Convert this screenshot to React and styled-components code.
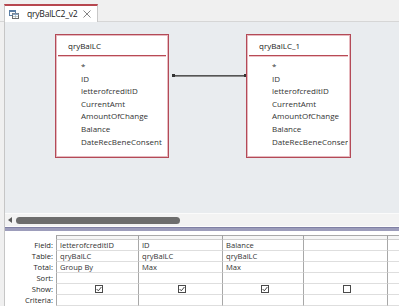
import React from "react";
import styled, { createGlobalStyle } from "styled-components";

const Global = createGlobalStyle`
  html, body { margin: 0; padding: 0; background: #f0f0f0; overflow: hidden; }
  * { box-sizing: border-box; }
`;

const Window = styled.div`
  width: 399px;
  height: 306px;
  display: flex;
  flex-direction: column;
  background: #f0f0f0;
  font-family: "Open Sans", "Noto Sans", sans-serif;
  color: #333;
  overflow: hidden;
`;

const TabStrip = styled.div`
  height: 22px;
  flex: none;
  display: flex;
  align-items: flex-end;
  padding-left: 4px;
  background: #f0f0f0;
  border-bottom: 1px solid #d6d6d6;
`;

const Tab = styled.div`
  width: 94px;
  height: 18px;
  margin-bottom: -1px;
  display: flex;
  align-items: center;
  padding-left: 4px;
  background: #ffffff;
  border-top: 2px solid #b7474f;
  border-left: 1px solid #c8c8c8;
  border-right: 1px solid #c8c8c8;
  font-size: 8.6px;
  letter-spacing: -0.25px;
  color: #222;
`;

const TabLabel = styled.span`
  margin-left: 8px;
  flex: 1;
  white-space: nowrap;
`;

const CloseIcon = styled.svg`
  margin-right: 6px;
`;

const Body = styled.div`
  flex: 1;
  display: flex;
  min-height: 0;
`;

const LeftRail = styled.div`
  width: 5px;
  flex: none;
  background: #f0f0f0;
  border-right: 1px solid #c6c6c6;
`;

const Main = styled.div`
  flex: 1;
  display: flex;
  flex-direction: column;
  min-width: 0;
`;

const Canvas = styled.div`
  position: relative;
  height: 191px;
  flex: none;
  background: #e9ecef;
`;

const TableBox = styled.div`
  position: absolute;
  left: ${(p) => p.$x}px;
  top: ${(p) => p.$y}px;
  width: ${(p) => p.$w}px;
  height: 124px;
  background: #fff;
  border: 1px solid #b34a57;
  box-shadow: inset 0 0 0 1px #e7b9bf;
  display: flex;
  flex-direction: column;
  overflow: hidden;
`;

const BoxTitle = styled.div`
  height: 21px;
  flex: none;
  display: flex;
  align-items: center;
  padding-left: 10px;
  margin: 0 2px;
  font-size: 8px;
  color: #222;
  border-bottom: 1px solid #b84a55;
  box-shadow: 0 1px 0 #ecc3c7;
`;

const FieldList = styled.div`
  display: flex;
  flex-direction: column;
  padding-top: 4px;
  padding-left: 25px;
  margin-right: 2px;
  overflow: hidden;
`;

const FieldItem = styled.div`
  height: 12.6px;
  line-height: 12.6px;
  font-size: 8px;
  color: #333;
  white-space: nowrap;
`;

const JoinLine = styled.div`
  position: absolute;
  left: 167px;
  top: 53px;
  width: 75px;
  height: 2px;
  background: #8a8a8a;
  border-top: 1px solid #555;
  &::before, &::after {
    content: "";
    position: absolute;
    top: -2px;
    width: 3px;
    height: 3px;
    background: #333;
  }
  &::before { left: 0; }
  &::after { right: 0; }
`;

const ScrollBar = styled.div`
  height: 14px;
  flex: none;
  display: flex;
  align-items: center;
  gap: 4px;
  padding-left: 3px;
  background: #f3f3f3;
  border-top: 1px solid #fbfbfb;
  border-bottom: 1px solid #fdfdfd;
`;

const Arrow = styled.div`
  width: 0;
  height: 0;
  border-top: 3px solid transparent;
  border-bottom: 3px solid transparent;
  border-right: 4px solid #5a5a5a;
`;

const Thumb = styled.div`
  width: 164px;
  height: 7px;
  border-radius: 4px;
  background: #6d6d6d;
`;

const Splitter = styled.div`
  height: 4px;
  flex: none;
  background: #9d9dbb;
  border-top: 1px solid #8080a4;
`;

const GridArea = styled.div`
  flex: 1;
  background: #fff;
  padding-top: 4px;
`;

const Grid = styled.div`
  display: grid;
  grid-template-columns: 51px 82px 84px 81px 84px 30px;
  grid-template-rows: 5px repeat(6, 11px);
  font-size: 7.6px;
`;

const Corner = styled.div``;

const HeadCell = styled.div`
  background: #f6f6f6;
  border-top: 1px solid #a9a9a9;
  border-bottom: 1px solid #d0d0d0;
  border-left: 1px solid #a0a0a0;
`;

const Label = styled.div`
  text-align: right;
  padding-right: 3px;
  line-height: 11px;
  color: #1f1f1f;
  white-space: nowrap;
`;

const Cell = styled.div`
  border-left: 1px solid #a8a8a8;
  border-bottom: 1px solid #dedede;
  padding-left: 3px;
  line-height: 10px;
  color: #333;
  white-space: nowrap;
  overflow: hidden;
  display: flex;
  align-items: center;
  justify-content: ${(p) => (p.$center ? "center" : "flex-start")};
`;

const Check = styled.div`
  width: 8px;
  height: 8px;
  border: 1px solid #4a4a4a;
  background: #fff;
  display: flex;
  align-items: center;
  justify-content: center;
`;

const fields = ["*", "ID", "letterofcreditID", "CurrentAmt", "AmountOfChange", "Balance", "DateRecBeneConsent"];

const rows = [
  { label: "Field:", vals: ["letterofcreditID", "ID", "Balance", "", ""] },
  { label: "Table:", vals: ["qryBalLC", "qryBalLC", "qryBalLC", "", ""] },
  { label: "Total:", vals: ["Group By", "Max", "Max", "", ""] },
  { label: "Sort:", vals: ["", "", "", "", ""] },
  { label: "Show:", checks: [true, true, true, false, null] },
  { label: "Criteria:", vals: ["", "", "", "", ""] },
];

function QueryIcon() {
  return (
    <svg width="10" height="9" viewBox="0 0 10 9">
      <rect x="0.5" y="0.5" width="6" height="5" fill="#fff" stroke="#5b7fa6" />
      <rect x="0.5" y="0.5" width="6" height="1.5" fill="#5b7fa6" />
      <rect x="3.5" y="3.5" width="6" height="5" fill="#fff" stroke="#6d6d6d" />
      <rect x="3.5" y="3.5" width="6" height="1.5" fill="#8aa7c7" />
      <line x1="4" y1="6.5" x2="9" y2="6.5" stroke="#9aa" strokeWidth="0.6" />
      <line x1="6.5" y1="5" x2="6.5" y2="8" stroke="#9aa" strokeWidth="0.6" />
    </svg>
  );
}

function CheckMark() {
  return (
    <svg width="6" height="6" viewBox="0 0 6 6">
      <path d="M0.6 3 L2.3 4.8 L5.4 1" fill="none" stroke="#333" strokeWidth="0.9" />
    </svg>
  );
}

export default function App() {
  return (
    <>
      <Global />
      <Window>
        <TabStrip>
          <Tab>
            <QueryIcon />
            <TabLabel>qryBalLC2_v2</TabLabel>
            <CloseIcon width="8" height="8" viewBox="0 0 8 8">
              <path d="M0.5 0.5 L7.5 7.5 M7.5 0.5 L0.5 7.5" stroke="#777" strokeWidth="0.9" />
            </CloseIcon>
          </Tab>
        </TabStrip>
        <Body>
          <LeftRail />
          <Main>
            <Canvas>
              <TableBox $x={50} $y={12} $w={114}>
                <BoxTitle>qryBalLC</BoxTitle>
                <FieldList>
                  {fields.map((f) => (
                    <FieldItem key={f}>{f}</FieldItem>
                  ))}
                </FieldList>
              </TableBox>
              <JoinLine />
              <TableBox $x={241} $y={12} $w={105}>
                <BoxTitle>qryBalLC_1</BoxTitle>
                <FieldList>
                  {fields.map((f) => (
                    <FieldItem key={f}>{f}</FieldItem>
                  ))}
                </FieldList>
              </TableBox>
            </Canvas>
            <ScrollBar>
              <Arrow />
              <Thumb />
            </ScrollBar>
            <Splitter />
            <GridArea>
              <Grid>
                <Corner />
                {[0, 1, 2, 3, 4].map((i) => (
                  <HeadCell key={i} />
                ))}
                {rows.map((r) => (
                  <React.Fragment key={r.label}>
                    <Label>{r.label}</Label>
                    {r.checks
                      ? r.checks.map((c, i) => (
                          <Cell key={i} $center>
                            {c !== null && <Check>{c && <CheckMark />}</Check>}
                          </Cell>
                        ))
                      : r.vals.map((v, i) => <Cell key={i}>{v}</Cell>)}
                  </React.Fragment>
                ))}
              </Grid>
            </GridArea>
          </Main>
        </Body>
      </Window>
    </>
  );
}
